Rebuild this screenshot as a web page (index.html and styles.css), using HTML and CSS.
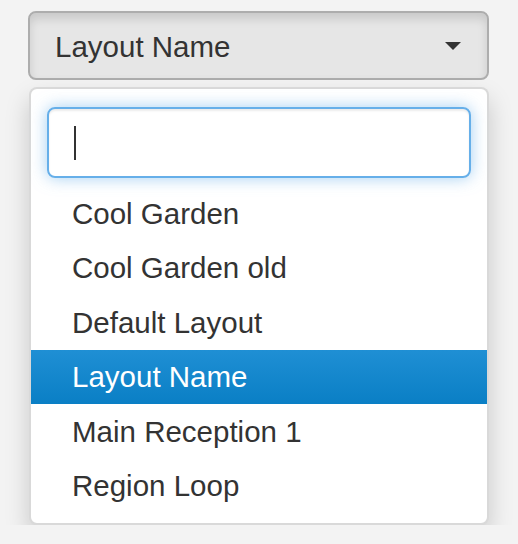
FILE: index.html
```html
<!DOCTYPE html>
<html>
<head>
<meta charset="utf-8">
<link rel="stylesheet" href="styles.css">
</head>
<body>
<div class="select">
  <button class="toggle" type="button">
    <span class="label">Layout Name</span>
    <span class="caret"></span>
  </button>
  <div class="menu">
    <div class="search"><span class="cursor"></span></div>
    <ul class="options">
      <li>Cool Garden</li>
      <li>Cool Garden old</li>
      <li>Default Layout</li>
      <li class="active">Layout Name</li>
      <li>Main Reception 1</li>
      <li>Region Loop</li>
    </ul>
  </div>
</div>
</body>
</html>
```
FILE: styles.css
```css
html, body {
  margin: 0;
  padding: 0;
  background: #f3f3f3;
  font-family: "Liberation Sans", Arial, sans-serif;
  color: #333;
}
.select {
  padding: 11px 0 0 28px;
  width: 461px;
}
.toggle {
  box-sizing: border-box;
  width: 461px;
  height: 69px;
  display: flex;
  align-items: center;
  justify-content: space-between;
  padding: 0 26px 0 25px;
  margin: 0;
  background: #e6e6e6;
  border: 2px solid #adadad;
  border-radius: 8px;
  box-shadow: inset 0 6px 10px rgba(0,0,0,0.125);
  font-family: inherit;
  font-size: 29.5px;
  color: #333;
}
.label {
  line-height: 1;
  padding-top: 2px;
}
.caret {
  width: 0;
  height: 0;
  border-left: 8px solid transparent;
  border-right: 8px solid transparent;
  border-top: 8px solid #333;
}
.menu {
  box-sizing: border-box;
  margin: 7px 0 0 1px;
  width: 460px;
  background: #fff;
  border: 2px solid rgba(0,0,0,0.15);
  border-radius: 8px;
  box-shadow: 0 12px 24px rgba(0,0,0,0.175);
  padding: 18px 0 10px 0;
}
.search {
  box-sizing: border-box;
  margin: 0 16px 0 16px;
  height: 71px;
  border: 2px solid #66afe9;
  border-radius: 8px;
  box-shadow: inset 0 2px 2px rgba(0,0,0,0.075), 0 0 16px rgba(102,175,233,0.6);
  display: flex;
  align-items: center;
  padding-left: 25px;
}
.cursor {
  width: 2px;
  height: 34px;
  background: #333;
}
.options {
  list-style: none;
  margin: 8px 0 0 0;
  padding: 0;
}
.options li {
  height: 54.5px;
  display: flex;
  align-items: center;
  padding-left: 41px;
  padding-top: 1px;
  box-sizing: border-box;
  font-size: 29.5px;
  color: #333;
}
.options li.active {
  color: #fff;
  background: linear-gradient(#1f8fd4, #0a7fc5);
}
```
